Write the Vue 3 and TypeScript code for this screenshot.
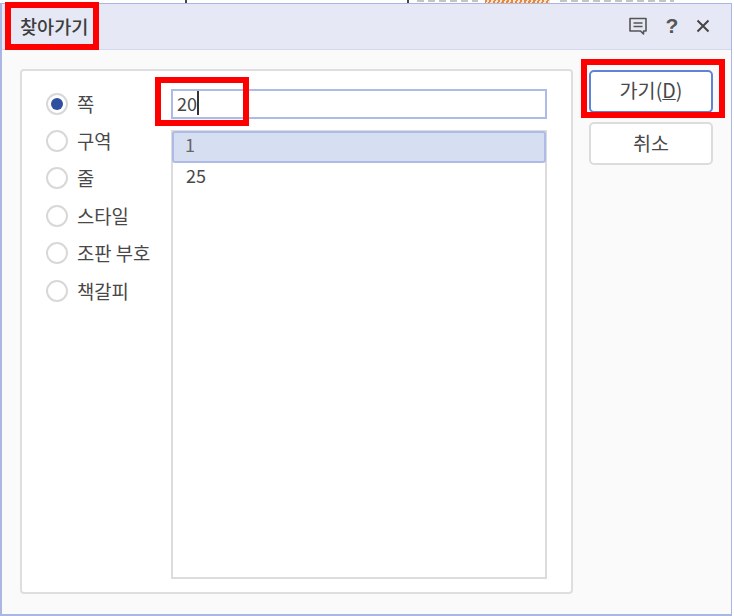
<script setup lang="ts">
const options = ['쪽', '구역', '줄', '스타일', '조판 부호', '책갈피']
const items = ['1', '25']
</script>

<template>
  <div class="page">
    <div class="scraps">
      <span class="tick t1"></span><span class="tick t2"></span>
      <span class="grey g1"></span><span class="orange"></span><span class="grey g2"></span>
    </div>
    <div class="dialog">
      <header class="titlebar">
        <span class="title">찾아가기</span>
        <div class="tools">
          <svg width="20" height="20" viewBox="0 0 20 20" fill="none" stroke="#555" stroke-width="1.6">
            <path d="M2 2.5h16v12.5h-2.5v3l-3-3H2z" stroke-linejoin="round" />
            <path d="M5.5 7h9M5.5 10.5h9" />
          </svg>
          <span class="help">?</span>
          <svg width="14" height="14" viewBox="0 0 14 14" fill="none" stroke="#444" stroke-width="2">
            <path d="M1.5 1.5l11 11M12.5 1.5l-11 11" />
          </svg>
        </div>
      </header>
      <main class="body">
        <section class="panel">
          <ul class="radios">
            <li v-for="(o, i) in options" :key="o" class="radio-row">
              <span class="radio" :class="{ on: i === 0 }"></span>
              <span>{{ o }}</span>
            </li>
          </ul>
          <div class="fields">
            <div class="input">
              <span>20</span><span class="caret"></span>
              <span class="mark input-mark"></span>
            </div>
            <div class="list">
              <div v-for="(it, i) in items" :key="it" class="item" :class="{ sel: i === 0 }">{{ it }}</div>
            </div>
          </div>
        </section>
        <aside class="actions">
          <button class="btn primary">가기(<u>D</u>)<span class="mark btn-mark"></span></button>
          <button class="btn cancel">취소</button>
        </aside>
      </main>
    </div>
  </div>
</template>

<style>
html, body { margin: 0; background: #fff; }
</style>

<style scoped>
.page {
  position: relative;
  width: 734px;
  height: 616px;
  overflow: hidden;
  box-sizing: border-box;
  padding-top: 3px;
  font-family: "Noto Sans CJK KR", "Noto Sans", sans-serif;
  color: #484848;
  font-size: 18.8px;
}
.scraps { position: absolute; inset: 0 0 auto 0; height: 3px; }
.tick { position: absolute; top: 0; width: 2px; height: 3px; background: #444; }
.t1 { left: 185px; }
.t2 { left: 407px; }
.orange { position: absolute; left: 485px; top: 0; width: 65px; height: 3px; background: repeating-linear-gradient(115deg, #e8883a 0 2px, #fbe3cc 2px 4px); }
.grey { position: absolute; top: 0; height: 2px; background: repeating-linear-gradient(90deg, #c4c4c4 0 7px, #fff 7px 11px); }
.g1 { left: 417px; width: 61px; }
.g2 { left: 560px; width: 114px; }
.dialog {
  width: 732px;
  height: 613px;
  box-sizing: border-box;
  border: 1px solid #a9b7e2;
  border-left-width: 2px;
  border-bottom-width: 2px;
  background: #fafafa;
  display: flex;
  flex-direction: column;
}
.titlebar {
  height: 46px;
  flex: none;
  box-sizing: border-box;
  background: #e6e9f5;
  border-bottom: 1px solid #d3d9ec;
  display: flex;
  align-items: center;
  justify-content: space-between;
  padding: 0 20px 2px 18px;
}
.title { font-size: 18.6px; font-weight: 500; color: #3d3d3d; }
.title::before {
  content: "";
  position: absolute;
  left: 5px;
  top: 2px;
  width: 94px;
  height: 48px;
  border: 6px solid #f00;
  box-sizing: border-box;
}
.mark { position: absolute; border: 6px solid #f00; box-sizing: border-box; pointer-events: none; }
.tools { display: flex; align-items: center; gap: 17px; margin-right: 1px; }
.help { font-family: "Liberation Sans", sans-serif; font-size: 21px; font-weight: 700; color: #555; width: 14px; text-align: center; }
.body {
  flex: 1;
  display: flex;
  padding: 19px 0 20px 18px;
  gap: 16px;
}
.panel {
  width: 553px;
  flex: none;
  box-sizing: border-box;
  background: #fff;
  border: 2px solid #dedede;
  border-radius: 4px;
  display: flex;
  padding: 14px 24px 13px 24px;
}
.radios { list-style: none; margin: 0; padding: 0; width: 125px; flex: none; }
.radio-row { height: 37.4px; display: flex; align-items: center; gap: 9px; line-height: 30px; }
.radio {
  width: 22px;
  height: 22px;
  box-sizing: border-box;
  border: 2px solid #d8d8d8;
  border-radius: 50%;
  background: #fff;
  position: relative;
  flex: none;
}
.radio.on::after {
  content: "";
  position: absolute;
  inset: 3px;
  border-radius: 50%;
  background: #2f4f9f;
}
.fields { flex: 1; display: flex; flex-direction: column; gap: 11px; min-width: 0; margin-top: 4px; }
.input {
  height: 30px;
  flex: none;
  box-sizing: border-box;
  border: 2px solid #aebbe6;
  padding: 0 0 2px 4px;
  display: flex;
  align-items: center;
  position: relative;
  font-size: 18px;
}
.caret { width: 2px; height: 24px; background: #333; }
.input-mark { left: -18px; top: -14px; width: 94px; height: 49px; }
.list {
  flex: 1;
  box-sizing: border-box;
  border: 2px solid #dcdcdc;
  background: #fff;
}
.item { height: 32px; box-sizing: border-box; padding: 0 0 9px 13px; display: flex; align-items: center; font-size: 18px; }
.item.sel { background: #d6dff2; border: 2px solid #aebbe6; border-radius: 3px; padding: 0 0 7px 11px; margin: -1px -1px 0; color: #666; }
.actions { width: 124px; flex: none; display: flex; flex-direction: column; gap: 9px; }
.btn {
  position: relative;
  width: 124px;
  height: 43px;
  box-sizing: border-box;
  background: #fff;
  border: 2px solid #dcdcdc;
  border-radius: 5px;
  font: inherit;
  font-size: 19.6px;
  color: #484848;
  padding: 0 0 2px;
}
.btn.primary { border-color: #5f83d6; margin-top: 1px; padding-bottom: 4px; }
.btn-mark { left: -10px; top: -13px; width: 144px; height: 59px; }
</style>
